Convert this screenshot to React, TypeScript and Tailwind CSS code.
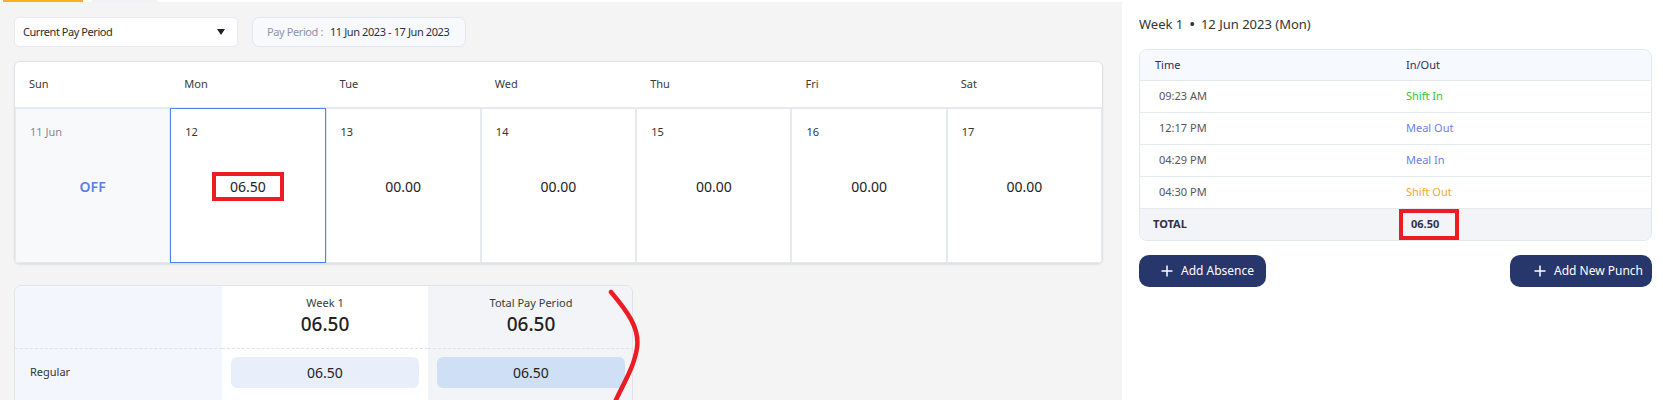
import React from "react";

const days = [
  { d: "Sun", n: "11 Jun", v: "OFF" },
  { d: "Mon", n: "12", v: "06.50" },
  { d: "Tue", n: "13", v: "00.00" },
  { d: "Wed", n: "14", v: "00.00" },
  { d: "Thu", n: "15", v: "00.00" },
  { d: "Fri", n: "16", v: "00.00" },
  { d: "Sat", n: "17", v: "00.00" },
];

const punches = [
  { t: "09:23 AM", s: "Shift In", c: "text-[#33c733]" },
  { t: "12:17 PM", s: "Meal Out", c: "text-[#6b80f2]" },
  { t: "04:29 PM", s: "Meal In", c: "text-[#6b80f2]" },
  { t: "04:30 PM", s: "Shift Out", c: "text-[#f5a43c]" },
];

function Plus() {
  return (
    <svg width="12" height="12" viewBox="0 0 12 12" className="shrink-0">
      <path d="M6 0.5V11.5M0.5 6H11.5" stroke="white" strokeWidth="1.5" />
    </svg>
  );
}

export default function App() {
  return (
    <div className="relative w-[1663px] h-[400px] overflow-hidden flex font-['Noto_Sans',sans-serif] text-[#333]">
      {/* Left area */}
      <div className="w-[1123px] h-full bg-[#f4f4f4] flex flex-col">
        <div className="h-[2px] bg-white flex shrink-0">
          <div className="ml-[3px] w-[80px] bg-[#fbb022]" />
          <div className="ml-[9px] w-[65px] bg-[#f1f2f5]" />
        </div>
        <div className="pl-[14px] pt-[15px] flex flex-col">
          <div className="flex gap-[14px]">
            <div className="w-[224px] h-[30px] bg-white border border-[#e6eaf0] rounded-[5px] flex items-center justify-between pl-[8px] pr-[12px] text-[11px] tracking-[-0.45px] text-[#2b2b2b]">
              <span>Current Pay Period</span>
              <svg width="8" height="6" viewBox="0 0 8 6">
                <path d="M0 0H8L4 6Z" fill="#222" />
              </svg>
            </div>
            <div className="w-[214px] h-[30px] bg-[#f7f9fc] border border-[#e2e8f0] rounded-[7px] flex items-center pl-[14px] text-[11px] tracking-[-0.4px]">
              <span className="text-[#8d95a8]">Pay Period :</span>
              <span className="ml-[7px] text-[#2f2f3a]">11 Jun 2023 - 17 Jun 2023</span>
            </div>
          </div>

          {/* Calendar card */}
          <div className="mt-[14px] w-[1089px] bg-white border border-[#dfe3e8] rounded-[6px] shadow-[0_1px_2px_rgba(0,0,0,0.08)] overflow-hidden">
            <div className="grid grid-cols-7 h-[46px] border-b border-[#e5e9f0]">
              {days.map((x) => (
                <div key={x.d} className="flex items-center pl-[14px] text-[11px] text-[#3a3a3a]">
                  {x.d}
                </div>
              ))}
            </div>
            <div className="grid grid-cols-7 h-[155px]">
              {days.map((x, i) => (
                <div
                  key={x.d}
                  className={
                    i === 0
                      ? "flex flex-col bg-[#f8f9fb] border border-[#e5e9f0] pt-[15px] pb-[30px]"
                      : i === 1
                      ? "flex flex-col bg-white border border-[#4a86e8] pt-[15px] pb-[30px]"
                      : "flex flex-col bg-white border border-[#e5e9f0] pt-[15px] pb-[30px]"
                  }
                >
                  <div className={i === 0 ? "pl-[14px] h-[16px] text-[11px] text-[#8a8a8a]" : "pl-[14px] h-[16px] text-[11px] text-[#333]"}>
                    {x.n}
                  </div>
                  <div className="flex-1 flex items-center justify-center">
                    {i === 0 ? (
                      <span className="text-[14px] font-semibold text-[#5b7fe3]">OFF</span>
                    ) : i === 1 ? (
                      <div className="w-[72px] h-[29px] border-[4px] border-[#ed1c24] flex items-center justify-center text-[14px] text-[#222]">
                        06.50
                      </div>
                    ) : (
                      <span className="text-[14px] text-[#222]">{x.v}</span>
                    )}
                  </div>
                </div>
              ))}
            </div>
          </div>

          {/* Summary card */}
          <div className="mt-[21px] w-[619px] h-[140px] border border-[#e0e3e8] rounded-[7px] overflow-hidden grid grid-cols-[207px_206px_206px] grid-rows-[63px_60px]">
            <div className="bg-[#f3f6fd] border-b border-dashed border-[#dbe2ec]" />
            <div className="bg-white border-b border-dashed border-[#dbe2ec] flex flex-col items-center pt-[9px]">
              <span className="text-[11px] text-[#3a3a3a] leading-[16px]">Week 1</span>
              <span className="text-[19px] font-medium text-[#222] leading-[26px]">06.50</span>
            </div>
            <div className="bg-[#f3f4f8] border-b border-dashed border-[#dbe2ec] flex flex-col items-center pt-[9px]">
              <span className="text-[11px] text-[#3a3a3a] leading-[16px]">Total Pay Period</span>
              <span className="text-[19px] font-medium text-[#222] leading-[26px]">06.50</span>
            </div>
            <div className="bg-[#f3f6fd] flex items-start pl-[15px] pt-[15px] text-[11px] text-[#333]">Regular</div>
            <div className="bg-white px-[9px] pt-[8px]">
              <div className="h-[31px] rounded-[6px] bg-[#e8effb] flex items-center justify-center text-[14px] text-[#222]">06.50</div>
            </div>
            <div className="bg-[#f3f4f8] px-[9px] pt-[8px]">
              <div className="h-[31px] rounded-[6px] bg-[#cfdff6] flex items-center justify-center text-[14px] text-[#222]">06.50</div>
            </div>
          </div>
        </div>
      </div>

      {/* Right panel */}
      <div className="flex-1 bg-white pl-[17px] pr-[11px] pt-[15px] flex flex-col">
        <div className="text-[13px] leading-[18px] text-[#333]">
          Week 1 <span className="mx-[3px] font-bold">•</span> 12 Jun 2023 (Mon)
        </div>
        <div className="mt-[16px] w-[513px] border border-[#e3e8ef] rounded-[8px] overflow-hidden text-[11px]">
          <div className="h-[31px] bg-[#f6f9fd] border-b border-[#e3e8ef] flex items-center text-[#2d2d5c]">
            <div className="w-[266px] pl-[15px]">Time</div>
            <div>In/Out</div>
          </div>
          {punches.map((p) => (
            <div key={p.t} className="h-[32px] border-b border-[#e5eaf0] flex items-center">
              <div className="w-[266px] pl-[19px] text-[#555]">{p.t}</div>
              <div className={p.c}>{p.s}</div>
            </div>
          ))}
          <div className="h-[31px] bg-[#f2f4f7] flex items-center">
            <div className="w-[259px] pl-[13px] font-bold text-[#2e3150]">TOTAL</div>
            <div className="w-[60px] h-[31px] border-[4px] border-[#ed1c24] flex items-center pl-[8px] font-bold text-[#2e3150]">
              06.50
            </div>
          </div>
        </div>
        <div className="mt-[14px] w-[513px] flex justify-between">
          <div className="w-[127px] h-[32px] rounded-[10px] bg-[#27366b] flex items-center pl-[22px] gap-[8px] text-[12px] text-white">
            <Plus />
            <span>Add Absence</span>
          </div>
          <div className="w-[142px] h-[32px] rounded-[10px] bg-[#27366b] flex items-center pl-[24px] gap-[8px] text-[12px] text-white">
            <Plus />
            <span>Add New Punch</span>
          </div>
        </div>
      </div>

      {/* Red annotation curve */}
      <svg className="absolute left-0 top-0 pointer-events-none" width="1663" height="400">
        <path d="M611 292 C627 311 640 328 637 348 C634 368 622 386 615 402" stroke="#ed1c24" strokeWidth="4.5" fill="none" strokeLinecap="round" />
      </svg>
    </div>
  );
}
